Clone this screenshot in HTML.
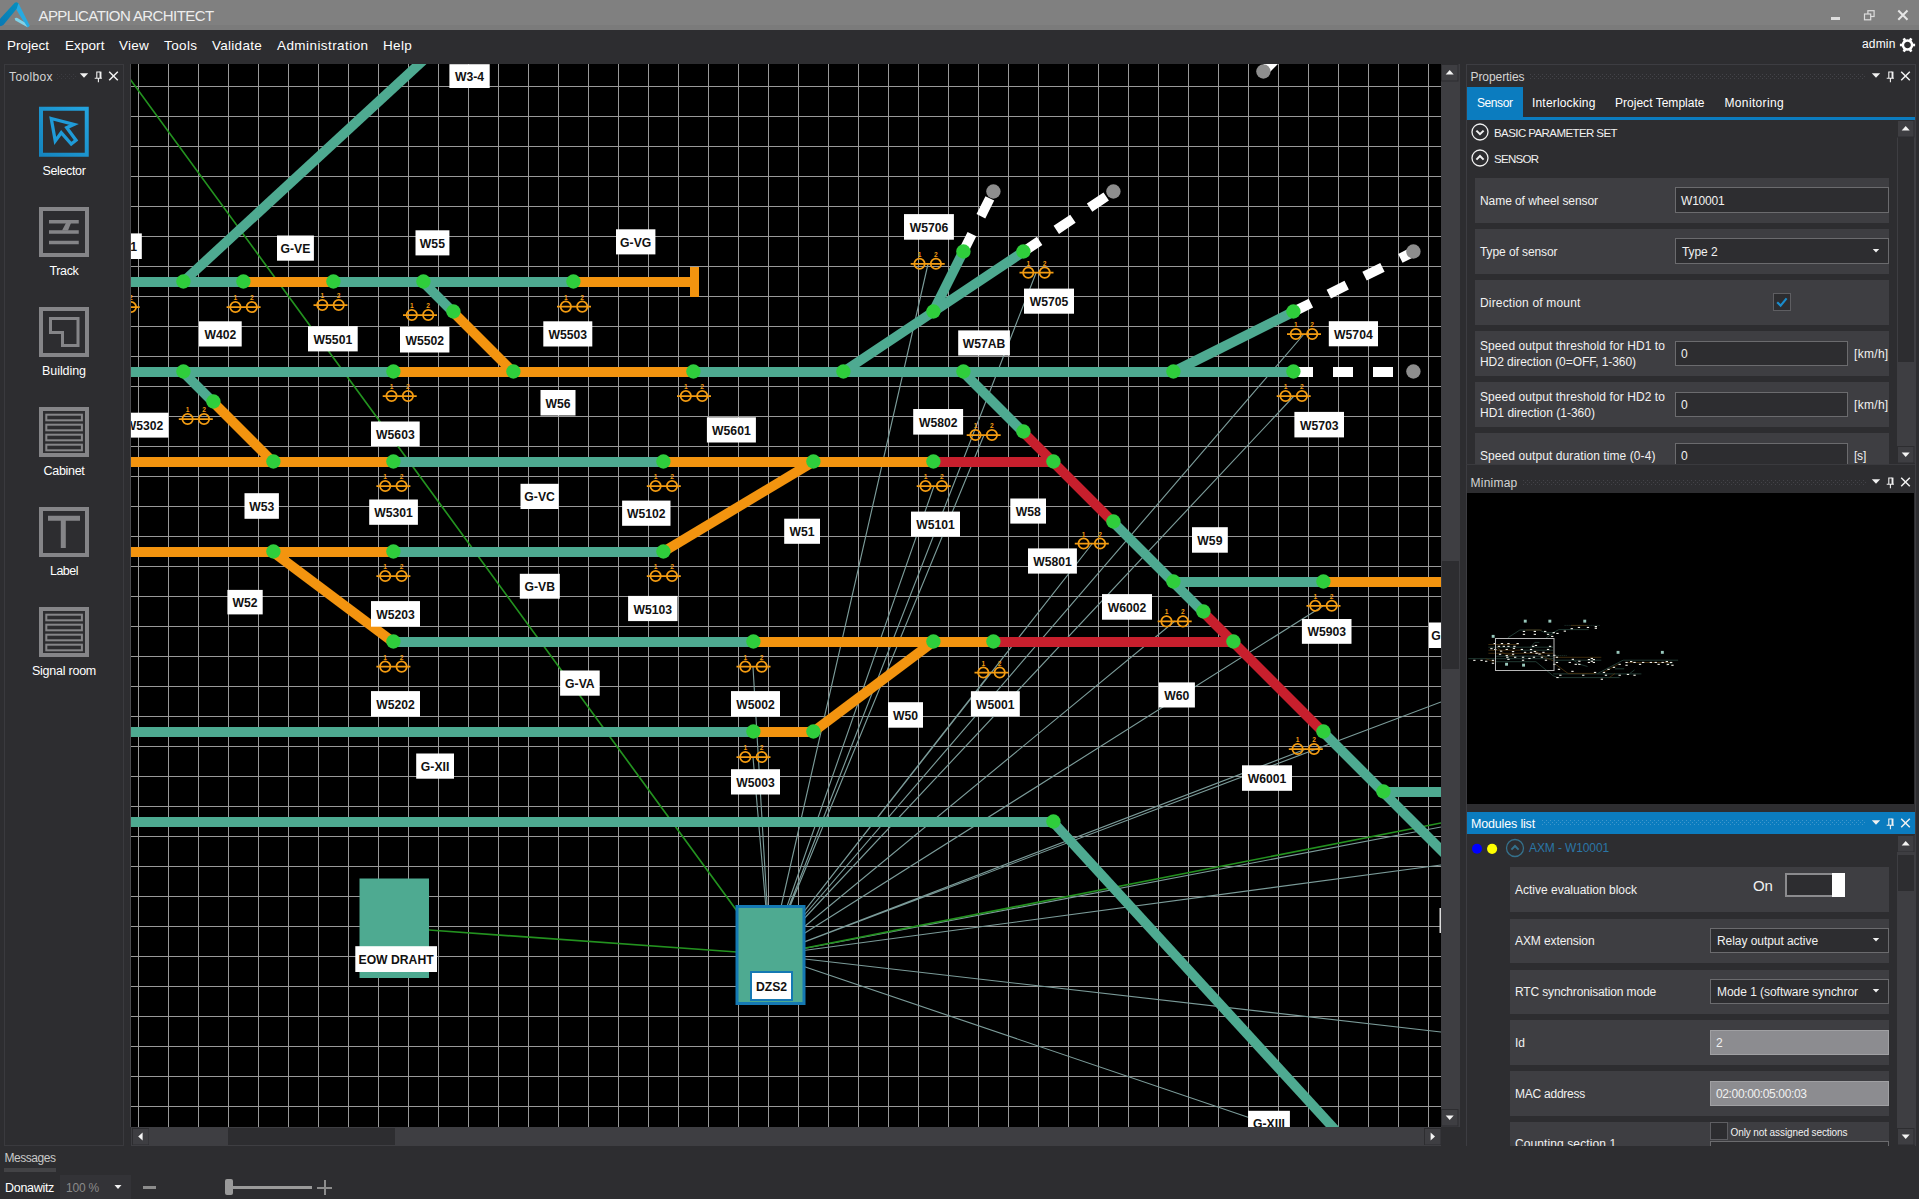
<!DOCTYPE html>
<html><head><meta charset="utf-8"><title>Application Architect</title>
<style>
html,body{margin:0;padding:0;background:#2d2d30;}
body{width:1919px;height:1199px;position:relative;overflow:hidden;font-family:"Liberation Sans",sans-serif;}
.t{position:absolute;white-space:nowrap;line-height:20px;height:20px;}
.r{position:absolute;box-sizing:border-box;}
svg{position:absolute;display:block;}
svg text{font-family:"Liberation Sans",sans-serif;}
</style></head><body>
<div class="r" style="left:0px;top:0px;width:1919px;height:30px;background:#808080;"></div>
<div class="r" style="left:0px;top:25px;width:1919px;height:5px;background:#7b7b7b;"></div>
<svg style="left:0;top:0" width="34" height="30" viewBox="0 0 34 30">
<defs><linearGradient id="lg1" x1="0" y1="1" x2="1" y2="0"><stop offset="0" stop-color="#0a78b4"/><stop offset="1" stop-color="#0590bf"/></linearGradient></defs>
<path d="M-2 20.8 L14.8 2.8 Q16.6 1.4 18.4 3.4 L18.6 6.4 L3.8 24.6 Q1.4 26.8 -2 26.2 Z" fill="url(#lg1)"/>
<path d="M18.4 3.2 L29.6 25.2 Q29.2 27.6 27.2 27.2 L16.4 9.8 Z" fill="#27aae1"/>
<path d="M14.6 18.6 Q15.6 17.4 17.4 17.9 L24.4 22.2 L27.6 27.2 L15.4 20.6 Z" fill="#7fd3ea"/>
</svg>
<span class="t" style="left:38.5px;top:5.5px;font-size:15px;color:#ededed;letter-spacing:-0.583px;">APPLICATION ARCHITECT</span>
<div class="r" style="left:1831px;top:17px;width:9px;height:3px;background:#dedede;"></div>
<svg style="left:1860px;top:6px" width="52" height="18" viewBox="1860 6 52 18">
<rect x="1867.9" y="10.7" width="6.2" height="5.8" fill="none" stroke="#dcdcdc" stroke-width="1.2"/>
<rect x="1864.5" y="14.0" width="6.2" height="5.8" fill="#808080" stroke="#dcdcdc" stroke-width="1.2"/>
<path d="M1898.3 10.5 L1907.5 19.7 M1907.5 10.5 L1898.3 19.7" stroke="#e6e6e6" stroke-width="2" fill="none"/>
</svg>
<div class="r" style="left:0px;top:30px;width:1919px;height:34px;background:#2d2d30;"></div>
<span class="t" style="left:7px;top:35.5px;font-size:13.5px;color:#ffffff;letter-spacing:-0.002px;">Project</span>
<span class="t" style="left:65px;top:35.5px;font-size:13.5px;color:#ffffff;letter-spacing:0.081px;">Export</span>
<span class="t" style="left:119px;top:35.5px;font-size:13.5px;color:#ffffff;letter-spacing:0.246px;">View</span>
<span class="t" style="left:164px;top:35.5px;font-size:13.5px;color:#ffffff;letter-spacing:0.397px;">Tools</span>
<span class="t" style="left:212px;top:35.5px;font-size:13.5px;color:#ffffff;letter-spacing:0.277px;">Validate</span>
<span class="t" style="left:277px;top:35.5px;font-size:13.5px;color:#ffffff;letter-spacing:0.426px;">Administration</span>
<span class="t" style="left:383px;top:35.5px;font-size:13.5px;color:#ffffff;letter-spacing:0.309px;">Help</span>
<span class="t" style="left:1862px;top:34.0px;font-size:12px;color:#ffffff;letter-spacing:0.164px;">admin</span>
<svg style="left:1897px;top:35px" width="22" height="20" viewBox="-10.5 -10 22 20"><g fill="#fff"><rect x="4.6" y="-1.3" width="3" height="2.6" transform="rotate(0)"/><rect x="4.6" y="-1.3" width="3" height="2.6" transform="rotate(60)"/><rect x="4.6" y="-1.3" width="3" height="2.6" transform="rotate(120)"/><rect x="4.6" y="-1.3" width="3" height="2.6" transform="rotate(180)"/><rect x="4.6" y="-1.3" width="3" height="2.6" transform="rotate(240)"/><rect x="4.6" y="-1.3" width="3" height="2.6" transform="rotate(300)"/></g><circle r="4.6" fill="none" stroke="#fff" stroke-width="2.5"/></svg>
<div class="r" style="left:4px;top:64px;width:120px;height:1082px;background:#2d2d30;border:1px solid #3a3a3e;"></div>
<span class="t" style="left:9px;top:67.0px;font-size:12px;color:#d4d4d4;letter-spacing:0.377px;">Toolbox</span>
<div class="r" style="left:57px;top:74px;width:19px;height:6px;background-image:linear-gradient(90deg,#3b3b40 1px,transparent 1px),linear-gradient(90deg,#3b3b40 1px,transparent 1px),linear-gradient(90deg,#3b3b40 1px,transparent 1px);background-size:4px 1px,4px 1px,4px 1px;background-position:0 0,2px 2px,0 4px;background-repeat:repeat-x;"></div>
<svg style="left:73px;top:66.7px" width="50" height="18" viewBox="73 66.7 50 18">
<path d="M79.8 72.9 h8.4 l-4.2 4.6 z" fill="#f1f1f1"/>
<path d="M96.8 77.7 v-6 h3.4 M94.7 78.0 h7.2 M98.4 78.3 v3.6" stroke="#f1f1f1" stroke-width="1.1" fill="none"/>
<path d="M100.5 71.3 v6.6" stroke="#f1f1f1" stroke-width="1.9" fill="none"/>
<path d="M109.2 71.5 l8.6 8.4 M117.8 71.5 l-8.6 8.4" stroke="#f1f1f1" stroke-width="1.5" fill="none"/>
</svg>
<svg style="left:0;top:100px" width="130" height="570" viewBox="0 100 130 570"><defs><linearGradient id="selg" x1="1" y1="0" x2="0" y2="1"><stop offset="0" stop-color="#23a3de"/><stop offset="1" stop-color="#1585bf"/></linearGradient></defs><rect x="41" y="108.75" width="45.75" height="46" fill="none" stroke="url(#selg)" stroke-width="4"/><path d="M51.25 118.5 L74 124.35 L66.75 127.75 L76 140.25 L71.25 144 L61.25 132.75 L55.25 141 Z" fill="none" stroke="#1f9bd8" stroke-width="3.3" stroke-linejoin="miter"/><rect x="41" y="209" width="46" height="46" fill="none" stroke="#858588" stroke-width="4"/><path d="M49 221.75 H78.75 M49 232 H78.75 M49 242.5 H78.75" stroke="#858588" stroke-width="3.7" fill="none"/><path d="M66 223 H71 L68 230.6 H62 Z" fill="#858588"/><rect x="41" y="309" width="46" height="46" fill="none" stroke="#858588" stroke-width="4"/><path d="M50.5 318.5 H78 V345.5 H62.5 V332.5 H50.5 Z" fill="none" stroke="#858588" stroke-width="3"/><rect x="41" y="409" width="46" height="46" fill="none" stroke="#858588" stroke-width="4"/><rect x="46.3" y="414.7" width="35.6" height="5.6" fill="none" stroke="#858588" stroke-width="2"/><rect x="46.3" y="424.7" width="35.6" height="5.6" fill="none" stroke="#858588" stroke-width="2"/><rect x="46.3" y="434.7" width="35.6" height="5.6" fill="none" stroke="#858588" stroke-width="2"/><rect x="46.3" y="444.7" width="35.6" height="5.6" fill="none" stroke="#858588" stroke-width="2"/><rect x="41" y="509" width="46" height="46" fill="none" stroke="#858588" stroke-width="4"/><path d="M48 518.3 H80 M63.3 520 V548" stroke="#858588" stroke-width="5" fill="none"/><rect x="41" y="609" width="46" height="46" fill="none" stroke="#858588" stroke-width="4"/><rect x="46.3" y="614.7" width="35.6" height="5.6" fill="none" stroke="#858588" stroke-width="2"/><rect x="46.3" y="624.7" width="35.6" height="5.6" fill="none" stroke="#858588" stroke-width="2"/><rect x="46.3" y="634.7" width="35.6" height="5.6" fill="none" stroke="#858588" stroke-width="2"/><rect x="46.3" y="644.7" width="35.6" height="5.6" fill="none" stroke="#858588" stroke-width="2"/></svg>
<span class="t" style="left:42.5px;top:161.0px;font-size:12.5px;color:#ffffff;letter-spacing:-0.357px;">Selector</span>
<span class="t" style="left:49.5px;top:261.0px;font-size:12.5px;color:#ffffff;letter-spacing:-0.357px;">Track</span>
<span class="t" style="left:42.0px;top:361.0px;font-size:12.5px;color:#ffffff;letter-spacing:-0.059px;">Building</span>
<span class="t" style="left:43.5px;top:461.0px;font-size:12.5px;color:#ffffff;letter-spacing:-0.297px;">Cabinet</span>
<span class="t" style="left:50.0px;top:561.0px;font-size:12.5px;color:#ffffff;letter-spacing:-0.516px;">Label</span>
<span class="t" style="left:32.0px;top:661.0px;font-size:12.5px;color:#ffffff;letter-spacing:-0.245px;">Signal room</span>
<div class="r" style="left:0px;top:1146px;width:1919px;height:53px;background:#2d2d30;"></div>
<span class="t" style="left:4.5px;top:1148.0px;font-size:12px;color:#c9c9c9;letter-spacing:-0.461px;">Messages</span>
<div class="r" style="left:4px;top:1168px;width:52px;height:4px;background:#434346;"></div>
<span class="t" style="left:5px;top:1178.0px;font-size:12.5px;color:#ffffff;letter-spacing:-0.301px;">Donawitz</span>
<div class="r" style="left:60px;top:1175px;width:71px;height:24px;background:#333337;"></div>
<span class="t" style="left:66px;top:1178.0px;font-size:12px;color:#8a8a8a;letter-spacing:-0.205px;">100 %</span>
<svg style="left:112px;top:1182px" width="12" height="10" viewBox="0 0 12 10"><path d="M2.5 3 h7 l-3.5 4 z" fill="#f1f1f1"/></svg>
<div class="r" style="left:143px;top:1186px;width:13px;height:3px;background:#8c8c8c;"></div>
<div class="r" style="left:233px;top:1186px;width:79px;height:3px;background:#9a9a9a;"></div>
<div class="r" style="left:225px;top:1179px;width:8px;height:16px;background:#9a9a9a;border-radius:2px;"></div>
<div class="r" style="left:317px;top:1186.5px;width:15px;height:2.0px;background:#8c8c8c;"></div>
<div class="r" style="left:323.5px;top:1180px;width:2.0px;height:15px;background:#8c8c8c;"></div>
<div class="r" style="left:130px;top:64px;width:1px;height:1063px;background:#4a4a4d;"></div>
<svg style="left:131px;top:64px;background:#000" width="1310" height="1063" viewBox="131 64 1310 1063"><path d="M138.5 64V1127M168.5 64V1127M198.5 64V1127M228.5 64V1127M258.5 64V1127M288.5 64V1127M318.5 64V1127M348.5 64V1127M378.5 64V1127M408.5 64V1127M438.5 64V1127M468.5 64V1127M498.5 64V1127M528.5 64V1127M558.5 64V1127M588.5 64V1127M618.5 64V1127M648.5 64V1127M678.5 64V1127M708.5 64V1127M738.5 64V1127M768.5 64V1127M798.5 64V1127M828.5 64V1127M858.5 64V1127M888.5 64V1127M918.5 64V1127M948.5 64V1127M978.5 64V1127M1008.5 64V1127M1038.5 64V1127M1068.5 64V1127M1098.5 64V1127M1128.5 64V1127M1158.5 64V1127M1188.5 64V1127M1218.5 64V1127M1248.5 64V1127M1278.5 64V1127M1308.5 64V1127M1338.5 64V1127M1368.5 64V1127M1398.5 64V1127M1428.5 64V1127M131 86.5H1441M131 116.5H1441M131 146.5H1441M131 176.5H1441M131 206.5H1441M131 236.5H1441M131 266.5H1441M131 296.5H1441M131 326.5H1441M131 356.5H1441M131 386.5H1441M131 416.5H1441M131 446.5H1441M131 476.5H1441M131 506.5H1441M131 536.5H1441M131 566.5H1441M131 596.5H1441M131 626.5H1441M131 656.5H1441M131 686.5H1441M131 716.5H1441M131 746.5H1441M131 776.5H1441M131 806.5H1441M131 836.5H1441M131 866.5H1441M131 896.5H1441M131 926.5H1441M131 956.5H1441M131 986.5H1441M131 1016.5H1441M131 1046.5H1441M131 1076.5H1441M131 1106.5H1441" stroke="#999999" stroke-width="1" fill="none" shape-rendering="crispEdges"/><path d="M770 955L753 667M770 955L753 757M770 955L928 264M770 955L934 486M770 955L1036 273M770 955L984 435M770 955L1092 544M770 955L991 672M770 955L1304 334M770 955L1294 396M770 955L1175 621M770 955L1323 606M770 955L1306 749M770 955L1441 702M770 955L1441 827M770 955L1441 865M770 955L1441 1032M770 955L1262 1122" stroke="#7b9b99" stroke-width="1.15" fill="none"/><path d="M118 62.5 L737 911 M429 930 L737 952 M770 955 L1441 823" stroke="#23921f" stroke-width="1.7" fill="none"/><line x1="130" y1="282" x2="243" y2="282" stroke="#4eaa91" stroke-width="9.8"/><line x1="243" y1="282" x2="333" y2="282" stroke="#f3940f" stroke-width="9.8"/><line x1="333" y1="282" x2="573" y2="282" stroke="#4eaa91" stroke-width="9.8"/><line x1="573" y1="282" x2="695" y2="282" stroke="#f3940f" stroke-width="9.8"/><line x1="183" y1="282" x2="486.5" y2="2" stroke="#4eaa91" stroke-width="9.8"/><line x1="423" y1="282" x2="453" y2="312" stroke="#4eaa91" stroke-width="9.8"/><line x1="453" y1="312" x2="513" y2="372" stroke="#f3940f" stroke-width="9.8"/><line x1="130" y1="372" x2="393" y2="372" stroke="#4eaa91" stroke-width="9.8"/><line x1="393" y1="372" x2="693" y2="372" stroke="#f3940f" stroke-width="9.8"/><line x1="693" y1="372" x2="1293" y2="372" stroke="#4eaa91" stroke-width="9.8"/><line x1="183" y1="372" x2="213" y2="402" stroke="#4eaa91" stroke-width="9.8"/><line x1="213" y1="402" x2="273" y2="462" stroke="#f3940f" stroke-width="9.8"/><line x1="843" y1="372" x2="933" y2="312" stroke="#4eaa91" stroke-width="9.8"/><line x1="933" y1="312" x2="963" y2="252" stroke="#4eaa91" stroke-width="9.8"/><line x1="933" y1="312" x2="1023" y2="252" stroke="#4eaa91" stroke-width="9.8"/><line x1="1173" y1="372" x2="1293" y2="312" stroke="#4eaa91" stroke-width="9.8"/><line x1="963" y1="372" x2="1023" y2="432" stroke="#4eaa91" stroke-width="9.8"/><line x1="130" y1="462" x2="393" y2="462" stroke="#f3940f" stroke-width="9.8"/><line x1="393" y1="462" x2="663" y2="462" stroke="#4eaa91" stroke-width="9.8"/><line x1="663" y1="462" x2="933" y2="462" stroke="#f3940f" stroke-width="9.8"/><line x1="663" y1="552" x2="813" y2="462" stroke="#f3940f" stroke-width="9.8"/><line x1="130" y1="552" x2="393" y2="552" stroke="#f3940f" stroke-width="9.8"/><line x1="393" y1="552" x2="663" y2="552" stroke="#4eaa91" stroke-width="9.8"/><line x1="273" y1="552" x2="393" y2="642" stroke="#f3940f" stroke-width="9.8"/><line x1="393" y1="642" x2="753" y2="642" stroke="#4eaa91" stroke-width="9.8"/><line x1="753" y1="642" x2="993" y2="642" stroke="#f3940f" stroke-width="9.8"/><line x1="933" y1="642" x2="813" y2="732" stroke="#f3940f" stroke-width="9.8"/><line x1="130" y1="732" x2="753" y2="732" stroke="#4eaa91" stroke-width="9.8"/><line x1="753" y1="732" x2="813" y2="732" stroke="#f3940f" stroke-width="9.8"/><line x1="130" y1="822" x2="1053" y2="822" stroke="#4eaa91" stroke-width="9.8"/><line x1="1053" y1="822" x2="1360" y2="1157" stroke="#4eaa91" stroke-width="9.8"/><line x1="1113" y1="522" x2="1203" y2="612" stroke="#4eaa91" stroke-width="9.8"/><line x1="1173" y1="582" x2="1323" y2="582" stroke="#4eaa91" stroke-width="9.8"/><line x1="1323" y1="582" x2="1445" y2="582" stroke="#f3940f" stroke-width="9.8"/><line x1="1323" y1="732" x2="1463" y2="872" stroke="#4eaa91" stroke-width="9.8"/><line x1="1383" y1="792" x2="1445" y2="792" stroke="#4eaa91" stroke-width="9.8"/><line x1="933" y1="462" x2="1053" y2="462" stroke="#c81f2d" stroke-width="9.8"/><line x1="1023" y1="432" x2="1113" y2="522" stroke="#c81f2d" stroke-width="9.8"/><line x1="993" y1="642" x2="1233" y2="642" stroke="#c81f2d" stroke-width="9.8"/><line x1="1203" y1="612" x2="1323" y2="732" stroke="#c81f2d" stroke-width="9.8"/><rect x="690" y="267" width="9" height="30" fill="#f3940f"/><line x1="963" y1="252" x2="993" y2="192" stroke="#fff" stroke-width="9.8" stroke-dasharray="20 20"/><line x1="1023" y1="252" x2="1113" y2="192" stroke="#fff" stroke-width="9.8" stroke-dasharray="20 20"/><line x1="1293" y1="312" x2="1413" y2="252" stroke="#fff" stroke-width="9.8" stroke-dasharray="20 20"/><line x1="1293" y1="372" x2="1413" y2="372" stroke="#fff" stroke-width="9.8" stroke-dasharray="20 20"/><line x1="1263" y1="72" x2="1313" y2="22" stroke="#fff" stroke-width="9.8" stroke-dasharray="20 20"/><circle cx="183.4" cy="281.5" r="7.2" fill="#2fce3c"/><circle cx="243.4" cy="281.5" r="7.2" fill="#2fce3c"/><circle cx="333.4" cy="281.5" r="7.2" fill="#2fce3c"/><circle cx="423.4" cy="281.5" r="7.2" fill="#2fce3c"/><circle cx="573.4" cy="281.5" r="7.2" fill="#2fce3c"/><circle cx="453.4" cy="311.5" r="7.2" fill="#2fce3c"/><circle cx="183.4" cy="371.5" r="7.2" fill="#2fce3c"/><circle cx="393.4" cy="371.5" r="7.2" fill="#2fce3c"/><circle cx="513.4" cy="371.5" r="7.2" fill="#2fce3c"/><circle cx="693.4" cy="371.5" r="7.2" fill="#2fce3c"/><circle cx="843.4" cy="371.5" r="7.2" fill="#2fce3c"/><circle cx="963.4" cy="371.5" r="7.2" fill="#2fce3c"/><circle cx="1173.4" cy="371.5" r="7.2" fill="#2fce3c"/><circle cx="1293.4" cy="371.5" r="7.2" fill="#2fce3c"/><circle cx="213.4" cy="401.5" r="7.2" fill="#2fce3c"/><circle cx="273.4" cy="461.5" r="7.2" fill="#2fce3c"/><circle cx="393.4" cy="461.5" r="7.2" fill="#2fce3c"/><circle cx="663.4" cy="461.5" r="7.2" fill="#2fce3c"/><circle cx="813.4" cy="461.5" r="7.2" fill="#2fce3c"/><circle cx="933.4" cy="461.5" r="7.2" fill="#2fce3c"/><circle cx="1053.4" cy="461.5" r="7.2" fill="#2fce3c"/><circle cx="933.4" cy="311.5" r="7.2" fill="#2fce3c"/><circle cx="963.4" cy="251.5" r="7.2" fill="#2fce3c"/><circle cx="1023.4" cy="251.5" r="7.2" fill="#2fce3c"/><circle cx="1293.4" cy="311.5" r="7.2" fill="#2fce3c"/><circle cx="1023.4" cy="431.5" r="7.2" fill="#2fce3c"/><circle cx="273.4" cy="551.5" r="7.2" fill="#2fce3c"/><circle cx="393.4" cy="551.5" r="7.2" fill="#2fce3c"/><circle cx="663.4" cy="551.5" r="7.2" fill="#2fce3c"/><circle cx="393.4" cy="641.5" r="7.2" fill="#2fce3c"/><circle cx="753.4" cy="641.5" r="7.2" fill="#2fce3c"/><circle cx="933.4" cy="641.5" r="7.2" fill="#2fce3c"/><circle cx="993.4" cy="641.5" r="7.2" fill="#2fce3c"/><circle cx="1233.4" cy="641.5" r="7.2" fill="#2fce3c"/><circle cx="753.4" cy="731.5" r="7.2" fill="#2fce3c"/><circle cx="813.4" cy="731.5" r="7.2" fill="#2fce3c"/><circle cx="1053.4" cy="821.5" r="7.2" fill="#2fce3c"/><circle cx="1113.4" cy="521.5" r="7.2" fill="#2fce3c"/><circle cx="1173.4" cy="581.5" r="7.2" fill="#2fce3c"/><circle cx="1323.4" cy="581.5" r="7.2" fill="#2fce3c"/><circle cx="1203.4" cy="611.5" r="7.2" fill="#2fce3c"/><circle cx="1323.4" cy="731.5" r="7.2" fill="#2fce3c"/><circle cx="1383.4" cy="791.5" r="7.2" fill="#2fce3c"/><circle cx="993.4" cy="191.5" r="7.2" fill="#8e8e8e"/><circle cx="1113.4" cy="191.5" r="7.2" fill="#8e8e8e"/><circle cx="1413.4" cy="251.5" r="7.2" fill="#8e8e8e"/><circle cx="1413.4" cy="371.5" r="7.2" fill="#8e8e8e"/><circle cx="1263.4" cy="71.5" r="7.2" fill="#8e8e8e"/><g transform="translate(243.6 307)" stroke="#f39c12" fill="none" stroke-width="1.75"><circle cx="-8.2" cy="0" r="5.2"/><circle cx="8.2" cy="0" r="5.2"/><path d="M-17 0H17"/><text x="-8.2" y="-7" font-size="6.6" font-weight="bold" text-anchor="middle" fill="#f39c12" stroke="none">1</text><text x="8.2" y="-7" font-size="6.6" font-weight="bold" text-anchor="middle" fill="#f39c12" stroke="none">2</text></g><g transform="translate(330.5 305)" stroke="#f39c12" fill="none" stroke-width="1.75"><circle cx="-8.2" cy="0" r="5.2"/><circle cx="8.2" cy="0" r="5.2"/><path d="M-17 0H17"/><text x="-8.2" y="-7" font-size="6.6" font-weight="bold" text-anchor="middle" fill="#f39c12" stroke="none">1</text><text x="8.2" y="-7" font-size="6.6" font-weight="bold" text-anchor="middle" fill="#f39c12" stroke="none">2</text></g><g transform="translate(420 315)" stroke="#f39c12" fill="none" stroke-width="1.75"><circle cx="-8.2" cy="0" r="5.2"/><circle cx="8.2" cy="0" r="5.2"/><path d="M-17 0H17"/><text x="-8.2" y="-7" font-size="6.6" font-weight="bold" text-anchor="middle" fill="#f39c12" stroke="none">1</text><text x="8.2" y="-7" font-size="6.6" font-weight="bold" text-anchor="middle" fill="#f39c12" stroke="none">2</text></g><g transform="translate(574 306.6)" stroke="#f39c12" fill="none" stroke-width="1.75"><circle cx="-8.2" cy="0" r="5.2"/><circle cx="8.2" cy="0" r="5.2"/><path d="M-17 0H17"/><text x="-8.2" y="-7" font-size="6.6" font-weight="bold" text-anchor="middle" fill="#f39c12" stroke="none">1</text><text x="8.2" y="-7" font-size="6.6" font-weight="bold" text-anchor="middle" fill="#f39c12" stroke="none">2</text></g><g transform="translate(399.7 396)" stroke="#f39c12" fill="none" stroke-width="1.75"><circle cx="-8.2" cy="0" r="5.2"/><circle cx="8.2" cy="0" r="5.2"/><path d="M-17 0H17"/><text x="-8.2" y="-7" font-size="6.6" font-weight="bold" text-anchor="middle" fill="#f39c12" stroke="none">1</text><text x="8.2" y="-7" font-size="6.6" font-weight="bold" text-anchor="middle" fill="#f39c12" stroke="none">2</text></g><g transform="translate(694 396)" stroke="#f39c12" fill="none" stroke-width="1.75"><circle cx="-8.2" cy="0" r="5.2"/><circle cx="8.2" cy="0" r="5.2"/><path d="M-17 0H17"/><text x="-8.2" y="-7" font-size="6.6" font-weight="bold" text-anchor="middle" fill="#f39c12" stroke="none">1</text><text x="8.2" y="-7" font-size="6.6" font-weight="bold" text-anchor="middle" fill="#f39c12" stroke="none">2</text></g><g transform="translate(195.8 419)" stroke="#f39c12" fill="none" stroke-width="1.75"><circle cx="-8.2" cy="0" r="5.2"/><circle cx="8.2" cy="0" r="5.2"/><path d="M-17 0H17"/><text x="-8.2" y="-7" font-size="6.6" font-weight="bold" text-anchor="middle" fill="#f39c12" stroke="none">1</text><text x="8.2" y="-7" font-size="6.6" font-weight="bold" text-anchor="middle" fill="#f39c12" stroke="none">2</text></g><g transform="translate(122.7 307)" stroke="#f39c12" fill="none" stroke-width="1.75"><circle cx="-8.2" cy="0" r="5.2"/><circle cx="8.2" cy="0" r="5.2"/><path d="M-17 0H17"/><text x="-8.2" y="-7" font-size="6.6" font-weight="bold" text-anchor="middle" fill="#f39c12" stroke="none">1</text><text x="8.2" y="-7" font-size="6.6" font-weight="bold" text-anchor="middle" fill="#f39c12" stroke="none">2</text></g><g transform="translate(393.4 486)" stroke="#f39c12" fill="none" stroke-width="1.75"><circle cx="-8.2" cy="0" r="5.2"/><circle cx="8.2" cy="0" r="5.2"/><path d="M-17 0H17"/><text x="-8.2" y="-7" font-size="6.6" font-weight="bold" text-anchor="middle" fill="#f39c12" stroke="none">1</text><text x="8.2" y="-7" font-size="6.6" font-weight="bold" text-anchor="middle" fill="#f39c12" stroke="none">2</text></g><g transform="translate(663.8 486)" stroke="#f39c12" fill="none" stroke-width="1.75"><circle cx="-8.2" cy="0" r="5.2"/><circle cx="8.2" cy="0" r="5.2"/><path d="M-17 0H17"/><text x="-8.2" y="-7" font-size="6.6" font-weight="bold" text-anchor="middle" fill="#f39c12" stroke="none">1</text><text x="8.2" y="-7" font-size="6.6" font-weight="bold" text-anchor="middle" fill="#f39c12" stroke="none">2</text></g><g transform="translate(393.4 576)" stroke="#f39c12" fill="none" stroke-width="1.75"><circle cx="-8.2" cy="0" r="5.2"/><circle cx="8.2" cy="0" r="5.2"/><path d="M-17 0H17"/><text x="-8.2" y="-7" font-size="6.6" font-weight="bold" text-anchor="middle" fill="#f39c12" stroke="none">1</text><text x="8.2" y="-7" font-size="6.6" font-weight="bold" text-anchor="middle" fill="#f39c12" stroke="none">2</text></g><g transform="translate(663.8 576)" stroke="#f39c12" fill="none" stroke-width="1.75"><circle cx="-8.2" cy="0" r="5.2"/><circle cx="8.2" cy="0" r="5.2"/><path d="M-17 0H17"/><text x="-8.2" y="-7" font-size="6.6" font-weight="bold" text-anchor="middle" fill="#f39c12" stroke="none">1</text><text x="8.2" y="-7" font-size="6.6" font-weight="bold" text-anchor="middle" fill="#f39c12" stroke="none">2</text></g><g transform="translate(393.4 666.6)" stroke="#f39c12" fill="none" stroke-width="1.75"><circle cx="-8.2" cy="0" r="5.2"/><circle cx="8.2" cy="0" r="5.2"/><path d="M-17 0H17"/><text x="-8.2" y="-7" font-size="6.6" font-weight="bold" text-anchor="middle" fill="#f39c12" stroke="none">1</text><text x="8.2" y="-7" font-size="6.6" font-weight="bold" text-anchor="middle" fill="#f39c12" stroke="none">2</text></g><g transform="translate(753.5 666.6)" stroke="#f39c12" fill="none" stroke-width="1.75"><circle cx="-8.2" cy="0" r="5.2"/><circle cx="8.2" cy="0" r="5.2"/><path d="M-17 0H17"/><text x="-8.2" y="-7" font-size="6.6" font-weight="bold" text-anchor="middle" fill="#f39c12" stroke="none">1</text><text x="8.2" y="-7" font-size="6.6" font-weight="bold" text-anchor="middle" fill="#f39c12" stroke="none">2</text></g><g transform="translate(753.5 757)" stroke="#f39c12" fill="none" stroke-width="1.75"><circle cx="-8.2" cy="0" r="5.2"/><circle cx="8.2" cy="0" r="5.2"/><path d="M-17 0H17"/><text x="-8.2" y="-7" font-size="6.6" font-weight="bold" text-anchor="middle" fill="#f39c12" stroke="none">1</text><text x="8.2" y="-7" font-size="6.6" font-weight="bold" text-anchor="middle" fill="#f39c12" stroke="none">2</text></g><g transform="translate(927.7 263.8)" stroke="#f39c12" fill="none" stroke-width="1.75"><circle cx="-8.2" cy="0" r="5.2"/><circle cx="8.2" cy="0" r="5.2"/><path d="M-17 0H17"/><text x="-8.2" y="-7" font-size="6.6" font-weight="bold" text-anchor="middle" fill="#f39c12" stroke="none">1</text><text x="8.2" y="-7" font-size="6.6" font-weight="bold" text-anchor="middle" fill="#f39c12" stroke="none">2</text></g><g transform="translate(1036.5 272.6)" stroke="#f39c12" fill="none" stroke-width="1.75"><circle cx="-8.2" cy="0" r="5.2"/><circle cx="8.2" cy="0" r="5.2"/><path d="M-17 0H17"/><text x="-8.2" y="-7" font-size="6.6" font-weight="bold" text-anchor="middle" fill="#f39c12" stroke="none">1</text><text x="8.2" y="-7" font-size="6.6" font-weight="bold" text-anchor="middle" fill="#f39c12" stroke="none">2</text></g><g transform="translate(1304 334)" stroke="#f39c12" fill="none" stroke-width="1.75"><circle cx="-8.2" cy="0" r="5.2"/><circle cx="8.2" cy="0" r="5.2"/><path d="M-17 0H17"/><text x="-8.2" y="-7" font-size="6.6" font-weight="bold" text-anchor="middle" fill="#f39c12" stroke="none">1</text><text x="8.2" y="-7" font-size="6.6" font-weight="bold" text-anchor="middle" fill="#f39c12" stroke="none">2</text></g><g transform="translate(1293.7 396)" stroke="#f39c12" fill="none" stroke-width="1.75"><circle cx="-8.2" cy="0" r="5.2"/><circle cx="8.2" cy="0" r="5.2"/><path d="M-17 0H17"/><text x="-8.2" y="-7" font-size="6.6" font-weight="bold" text-anchor="middle" fill="#f39c12" stroke="none">1</text><text x="8.2" y="-7" font-size="6.6" font-weight="bold" text-anchor="middle" fill="#f39c12" stroke="none">2</text></g><g transform="translate(983.7 435)" stroke="#f39c12" fill="none" stroke-width="1.75"><circle cx="-8.2" cy="0" r="5.2"/><circle cx="8.2" cy="0" r="5.2"/><path d="M-17 0H17"/><text x="-8.2" y="-7" font-size="6.6" font-weight="bold" text-anchor="middle" fill="#f39c12" stroke="none">1</text><text x="8.2" y="-7" font-size="6.6" font-weight="bold" text-anchor="middle" fill="#f39c12" stroke="none">2</text></g><g transform="translate(933.7 486)" stroke="#f39c12" fill="none" stroke-width="1.75"><circle cx="-8.2" cy="0" r="5.2"/><circle cx="8.2" cy="0" r="5.2"/><path d="M-17 0H17"/><text x="-8.2" y="-7" font-size="6.6" font-weight="bold" text-anchor="middle" fill="#f39c12" stroke="none">1</text><text x="8.2" y="-7" font-size="6.6" font-weight="bold" text-anchor="middle" fill="#f39c12" stroke="none">2</text></g><g transform="translate(1091.8 543.5)" stroke="#f39c12" fill="none" stroke-width="1.75"><circle cx="-8.2" cy="0" r="5.2"/><circle cx="8.2" cy="0" r="5.2"/><path d="M-17 0H17"/><text x="-8.2" y="-7" font-size="6.6" font-weight="bold" text-anchor="middle" fill="#f39c12" stroke="none">1</text><text x="8.2" y="-7" font-size="6.6" font-weight="bold" text-anchor="middle" fill="#f39c12" stroke="none">2</text></g><g transform="translate(1174.7 621.4)" stroke="#f39c12" fill="none" stroke-width="1.75"><circle cx="-8.2" cy="0" r="5.2"/><circle cx="8.2" cy="0" r="5.2"/><path d="M-17 0H17"/><text x="-8.2" y="-7" font-size="6.6" font-weight="bold" text-anchor="middle" fill="#f39c12" stroke="none">1</text><text x="8.2" y="-7" font-size="6.6" font-weight="bold" text-anchor="middle" fill="#f39c12" stroke="none">2</text></g><g transform="translate(1323.5 605.8)" stroke="#f39c12" fill="none" stroke-width="1.75"><circle cx="-8.2" cy="0" r="5.2"/><circle cx="8.2" cy="0" r="5.2"/><path d="M-17 0H17"/><text x="-8.2" y="-7" font-size="6.6" font-weight="bold" text-anchor="middle" fill="#f39c12" stroke="none">1</text><text x="8.2" y="-7" font-size="6.6" font-weight="bold" text-anchor="middle" fill="#f39c12" stroke="none">2</text></g><g transform="translate(991.5 672.5)" stroke="#f39c12" fill="none" stroke-width="1.75"><circle cx="-8.2" cy="0" r="5.2"/><circle cx="8.2" cy="0" r="5.2"/><path d="M-17 0H17"/><text x="-8.2" y="-7" font-size="6.6" font-weight="bold" text-anchor="middle" fill="#f39c12" stroke="none">1</text><text x="8.2" y="-7" font-size="6.6" font-weight="bold" text-anchor="middle" fill="#f39c12" stroke="none">2</text></g><g transform="translate(1305.8 749)" stroke="#f39c12" fill="none" stroke-width="1.75"><circle cx="-8.2" cy="0" r="5.2"/><circle cx="8.2" cy="0" r="5.2"/><path d="M-17 0H17"/><text x="-8.2" y="-7" font-size="6.6" font-weight="bold" text-anchor="middle" fill="#f39c12" stroke="none">1</text><text x="8.2" y="-7" font-size="6.6" font-weight="bold" text-anchor="middle" fill="#f39c12" stroke="none">2</text></g><rect x="359.5" y="878.5" width="69.5" height="99.5" fill="#4eaa91"/><rect x="737" y="906.5" width="67" height="97" fill="#4eaa91" stroke="#1579b3" stroke-width="3"/><rect x="449.4" y="64.2" width="40.3" height="23.8" fill="#fff"/><text x="469.5" y="81.1" font-size="12.2" font-weight="bold" text-anchor="middle" fill="#111">W3-4</text><rect x="100.2" y="233.4" width="41.6" height="25.6" fill="#fff"/><text x="121.0" y="251.2" font-size="12.2" font-weight="bold" text-anchor="middle" fill="#111">W401</text><rect x="277.0" y="235.5" width="36.9" height="25.2" fill="#fff"/><text x="295.4" y="253.1" font-size="12.2" font-weight="bold" text-anchor="middle" fill="#111">G-VE</text><rect x="415.5" y="230.3" width="33.9" height="25.1" fill="#fff"/><text x="432.4" y="247.9" font-size="12.2" font-weight="bold" text-anchor="middle" fill="#111">W55</text><rect x="616.0" y="229.3" width="39.4" height="25.1" fill="#fff"/><text x="635.7" y="246.9" font-size="12.2" font-weight="bold" text-anchor="middle" fill="#111">G-VG</text><rect x="199.0" y="321.3" width="42.7" height="25.2" fill="#fff"/><text x="220.3" y="338.9" font-size="12.2" font-weight="bold" text-anchor="middle" fill="#111">W402</text><rect x="308.0" y="326.2" width="49.7" height="25.2" fill="#fff"/><text x="332.9" y="343.8" font-size="12.2" font-weight="bold" text-anchor="middle" fill="#111">W5501</text><rect x="400.0" y="327.0" width="49.4" height="25.5" fill="#fff"/><text x="424.7" y="344.8" font-size="12.2" font-weight="bold" text-anchor="middle" fill="#111">W5502</text><rect x="543.3" y="321.3" width="49.0" height="25.2" fill="#fff"/><text x="567.8" y="338.9" font-size="12.2" font-weight="bold" text-anchor="middle" fill="#111">W5503</text><rect x="540.5" y="390.0" width="35.0" height="25.5" fill="#fff"/><text x="558.0" y="407.8" font-size="12.2" font-weight="bold" text-anchor="middle" fill="#111">W56</text><rect x="119.5" y="412.7" width="49.0" height="24.9" fill="#fff"/><text x="144.0" y="430.1" font-size="12.2" font-weight="bold" text-anchor="middle" fill="#111">W5302</text><rect x="371.0" y="421.5" width="48.7" height="24.8" fill="#fff"/><text x="395.4" y="438.9" font-size="12.2" font-weight="bold" text-anchor="middle" fill="#111">W5603</text><rect x="706.9" y="417.3" width="49.0" height="25.2" fill="#fff"/><text x="731.4" y="434.9" font-size="12.2" font-weight="bold" text-anchor="middle" fill="#111">W5601</text><rect x="244.5" y="493.2" width="34.4" height="25.6" fill="#fff"/><text x="261.7" y="511.0" font-size="12.2" font-weight="bold" text-anchor="middle" fill="#111">W53</text><rect x="369.2" y="499.5" width="48.7" height="25.3" fill="#fff"/><text x="393.5" y="517.1" font-size="12.2" font-weight="bold" text-anchor="middle" fill="#111">W5301</text><rect x="520.5" y="483.8" width="38.2" height="25.2" fill="#fff"/><text x="539.6" y="501.4" font-size="12.2" font-weight="bold" text-anchor="middle" fill="#111">G-VC</text><rect x="622.1" y="500.6" width="48.4" height="25.2" fill="#fff"/><text x="646.3" y="518.2" font-size="12.2" font-weight="bold" text-anchor="middle" fill="#111">W5102</text><rect x="519.8" y="573.8" width="40.0" height="24.9" fill="#fff"/><text x="539.8" y="591.2" font-size="12.2" font-weight="bold" text-anchor="middle" fill="#111">G-VB</text><rect x="227.4" y="589.9" width="35.3" height="24.5" fill="#fff"/><text x="245.1" y="607.1" font-size="12.2" font-weight="bold" text-anchor="middle" fill="#111">W52</text><rect x="371.0" y="601.1" width="49.0" height="25.6" fill="#fff"/><text x="395.5" y="618.9" font-size="12.2" font-weight="bold" text-anchor="middle" fill="#111">W5203</text><rect x="628.1" y="595.9" width="49.4" height="25.2" fill="#fff"/><text x="652.8" y="613.5" font-size="12.2" font-weight="bold" text-anchor="middle" fill="#111">W5103</text><rect x="560.1" y="670.5" width="39.6" height="25.2" fill="#fff"/><text x="579.9" y="688.1" font-size="12.2" font-weight="bold" text-anchor="middle" fill="#111">G-VA</text><rect x="371.0" y="691.1" width="49.0" height="25.6" fill="#fff"/><text x="395.5" y="708.9" font-size="12.2" font-weight="bold" text-anchor="middle" fill="#111">W5202</text><rect x="731.0" y="691.1" width="49.0" height="25.6" fill="#fff"/><text x="755.5" y="708.9" font-size="12.2" font-weight="bold" text-anchor="middle" fill="#111">W5002</text><rect x="416.2" y="753.5" width="37.8" height="25.2" fill="#fff"/><text x="435.1" y="771.1" font-size="12.2" font-weight="bold" text-anchor="middle" fill="#111">G-XII</text><rect x="731.0" y="769.2" width="49.0" height="25.3" fill="#fff"/><text x="755.5" y="786.9" font-size="12.2" font-weight="bold" text-anchor="middle" fill="#111">W5003</text><rect x="904.0" y="214.1" width="49.9" height="25.6" fill="#fff"/><text x="929.0" y="231.9" font-size="12.2" font-weight="bold" text-anchor="middle" fill="#111">W5706</text><rect x="1024.0" y="288.6" width="50.0" height="25.1" fill="#fff"/><text x="1049.0" y="306.1" font-size="12.2" font-weight="bold" text-anchor="middle" fill="#111">W5705</text><rect x="958.2" y="330.4" width="51.7" height="25.1" fill="#fff"/><text x="984.0" y="347.9" font-size="12.2" font-weight="bold" text-anchor="middle" fill="#111">W57AB</text><rect x="1328.8" y="321.2" width="49.2" height="25.1" fill="#fff"/><text x="1353.4" y="338.8" font-size="12.2" font-weight="bold" text-anchor="middle" fill="#111">W5704</text><rect x="913.2" y="409.0" width="49.9" height="25.6" fill="#fff"/><text x="938.2" y="426.8" font-size="12.2" font-weight="bold" text-anchor="middle" fill="#111">W5802</text><rect x="1294.4" y="411.9" width="49.6" height="25.5" fill="#fff"/><text x="1319.2" y="429.6" font-size="12.2" font-weight="bold" text-anchor="middle" fill="#111">W5703</text><rect x="784.2" y="518.7" width="35.8" height="25.1" fill="#fff"/><text x="802.1" y="536.2" font-size="12.2" font-weight="bold" text-anchor="middle" fill="#111">W51</text><rect x="911.0" y="511.6" width="49.0" height="25.1" fill="#fff"/><text x="935.5" y="529.2" font-size="12.2" font-weight="bold" text-anchor="middle" fill="#111">W5101</text><rect x="1010.3" y="498.5" width="35.7" height="25.1" fill="#fff"/><text x="1028.2" y="516.0" font-size="12.2" font-weight="bold" text-anchor="middle" fill="#111">W58</text><rect x="1028.0" y="548.4" width="48.9" height="25.2" fill="#fff"/><text x="1052.5" y="566.0" font-size="12.2" font-weight="bold" text-anchor="middle" fill="#111">W5801</text><rect x="1192.0" y="527.2" width="35.8" height="25.5" fill="#fff"/><text x="1209.9" y="545.0" font-size="12.2" font-weight="bold" text-anchor="middle" fill="#111">W59</text><rect x="1102.0" y="594.1" width="50.0" height="25.6" fill="#fff"/><text x="1127.0" y="611.9" font-size="12.2" font-weight="bold" text-anchor="middle" fill="#111">W6002</text><rect x="1301.9" y="619.0" width="49.6" height="24.8" fill="#fff"/><text x="1326.7" y="636.4" font-size="12.2" font-weight="bold" text-anchor="middle" fill="#111">W5903</text><rect x="1429.0" y="622.5" width="35.0" height="25.5" fill="#fff"/><text x="1446.5" y="640.2" font-size="12.2" font-weight="bold" text-anchor="middle" fill="#111">G-VD</text><rect x="970.9" y="691.2" width="48.9" height="25.2" fill="#fff"/><text x="995.3" y="708.8" font-size="12.2" font-weight="bold" text-anchor="middle" fill="#111">W5001</text><rect x="888.0" y="702.2" width="35.0" height="25.5" fill="#fff"/><text x="905.5" y="720.0" font-size="12.2" font-weight="bold" text-anchor="middle" fill="#111">W50</text><rect x="1158.7" y="682.4" width="36.2" height="25.1" fill="#fff"/><text x="1176.8" y="700.0" font-size="12.2" font-weight="bold" text-anchor="middle" fill="#111">W60</text><rect x="1242.0" y="765.3" width="50.0" height="25.5" fill="#fff"/><text x="1267.0" y="783.0" font-size="12.2" font-weight="bold" text-anchor="middle" fill="#111">W6001</text><rect x="355.3" y="946.2" width="81.7" height="25.8" fill="#fff"/><text x="396.1" y="964.1" font-size="12.2" font-weight="bold" text-anchor="middle" fill="#111">EOW DRAHT</text><rect x="1248.0" y="1110.8" width="41.9" height="25.2" fill="#fff"/><text x="1269.0" y="1128.4" font-size="12.2" font-weight="bold" text-anchor="middle" fill="#111">G-XIII</text><rect x="751" y="972" width="41" height="28" fill="#fff" stroke="#1579b3" stroke-width="2"/><text x="771.5" y="991.1" font-size="12.2" font-weight="bold" text-anchor="middle" fill="#111">DZS2</text><rect x="1439.5" y="908" width="1.5" height="25" fill="#ddd"/></svg>
<div class="r" style="left:1441px;top:64px;width:19px;height:1063px;background:#3e3e42;"></div>
<div class="r" style="left:1441.5px;top:561px;width:17.0px;height:108px;background:#2d2d30;"></div>
<svg style="left:1441px;top:64px" width="17.5" height="17.5" viewBox="0 0 17.5 17.5"><rect x="0.5" y="0.5" width="16.5" height="16.5" fill="#3e3e42" stroke="#2d2d30"/><path d="M4.7 10.4 h8 l-4 -4.4 z" fill="#f4f4f4"/></svg>
<svg style="left:1441px;top:1109px" width="17.5" height="17.5" viewBox="0 0 17.5 17.5"><rect x="0.5" y="0.5" width="16.5" height="16.5" fill="#3e3e42" stroke="#2d2d30"/><path d="M4.7 6.6 h8 l-4 4.4 z" fill="#f4f4f4"/></svg>
<div class="r" style="left:131px;top:1127px;width:1310px;height:18.5px;background:#3e3e42;"></div>
<div class="r" style="left:228px;top:1128px;width:167px;height:16.5px;background:#2d2d30;"></div>
<svg style="left:131.5px;top:1127.5px" width="17.5" height="17.5" viewBox="0 0 17.5 17.5"><rect x="0.5" y="0.5" width="16.5" height="16.5" fill="#3e3e42" stroke="#2d2d30"/><path d="M10.6 4.5 v8 l-4.4 -4 z" fill="#f4f4f4"/></svg>
<svg style="left:1423.5px;top:1127.5px" width="17.5" height="17.5" viewBox="0 0 17.5 17.5"><rect x="0.5" y="0.5" width="16.5" height="16.5" fill="#3e3e42" stroke="#2d2d30"/><path d="M6.6 4.5 v8 l4.4 -4 z" fill="#f4f4f4"/></svg>
<div class="r" style="left:1441px;top:1127px;width:25px;height:19px;background:#2d2d30;"></div>
<div class="r" style="left:1460px;top:64px;width:6px;height:1063px;background:#2d2d30;"></div>
<div class="r" style="left:1460px;top:64px;width:459px;height:1082px;background:#2d2d30;"></div>
<div class="r" style="left:1466px;top:64px;width:450px;height:1082px;background:#2d2d30;border:1px solid #3d3d42;border-bottom:none;"></div>
<span class="t" style="left:1470.5px;top:66.5px;font-size:12px;color:#d4d4d4;letter-spacing:-0.069px;">Properties</span>
<div class="r" style="left:1530px;top:74px;width:336px;height:6px;background-image:linear-gradient(90deg,#434348 1px,transparent 1px),linear-gradient(90deg,#434348 1px,transparent 1px),linear-gradient(90deg,#434348 1px,transparent 1px);background-size:4px 1px,4px 1px,4px 1px;background-position:0 0,2px 2px,0 4px;background-repeat:repeat-x;"></div>
<svg style="left:1865px;top:66.7px" width="50" height="18" viewBox="1865 66.7 50 18">
<path d="M1871.8 72.9 h8.4 l-4.2 4.6 z" fill="#f1f1f1"/>
<path d="M1888.8 77.7 v-6 h3.4 M1886.7 78.0 h7.2 M1890.4 78.3 v3.6" stroke="#f1f1f1" stroke-width="1.1" fill="none"/>
<path d="M1892.5 71.3 v6.6" stroke="#f1f1f1" stroke-width="1.9" fill="none"/>
<path d="M1901.2 71.5 l8.6 8.4 M1909.8 71.5 l-8.6 8.4" stroke="#f1f1f1" stroke-width="1.5" fill="none"/>
</svg>
<div class="r" style="left:1467px;top:87px;width:56px;height:30px;background:#0b7cbf;"></div>
<div class="r" style="left:1467px;top:116.5px;width:448px;height:3.0px;background:#0b7cbf;"></div>
<span class="t" style="left:1477px;top:93.0px;font-size:12px;color:#ffffff;letter-spacing:-0.420px;">Sensor</span>
<span class="t" style="left:1532px;top:93.0px;font-size:12px;color:#ffffff;letter-spacing:0.178px;">Interlocking</span>
<span class="t" style="left:1615px;top:93.0px;font-size:12px;color:#ffffff;letter-spacing:0.022px;">Project Template</span>
<span class="t" style="left:1724.5px;top:93.0px;font-size:12px;color:#ffffff;letter-spacing:0.348px;">Monitoring</span>
<div class="r" style="left:1897px;top:120px;width:17.5px;height:343px;background:#3e3e42;"></div>
<div class="r" style="left:1897.5px;top:137px;width:16.5px;height:225px;background:#2d2d30;"></div>
<svg style="left:1897px;top:120px" width="17.5" height="17.5" viewBox="0 0 17.5 17.5"><rect x="0.5" y="0.5" width="16.5" height="16.5" fill="#3e3e42" stroke="#2d2d30"/><path d="M4.7 10.4 h8 l-4 -4.4 z" fill="#f4f4f4"/></svg>
<svg style="left:1897px;top:445.5px" width="17.5" height="17.5" viewBox="0 0 17.5 17.5"><rect x="0.5" y="0.5" width="16.5" height="16.5" fill="#3e3e42" stroke="#2d2d30"/><path d="M4.7 6.6 h8 l-4 4.4 z" fill="#f4f4f4"/></svg>
<svg style="left:1469px;top:121px" width="22" height="22" viewBox="1469 121 22 22"><circle cx="1480" cy="132" r="8" fill="none" stroke="#f1f1f1" stroke-width="1.3"/><path d="M1476.4 130.6 L1480 134.2 L1483.6 130.6" fill="none" stroke="#f1f1f1" stroke-width="2"/></svg>
<span class="t" style="left:1494px;top:122.5px;font-size:11.5px;color:#f1f1f1;letter-spacing:-0.578px;">BASIC PARAMETER SET</span>
<svg style="left:1469px;top:147px" width="22" height="22" viewBox="1469 147 22 22"><circle cx="1480" cy="158" r="8" fill="none" stroke="#f1f1f1" stroke-width="1.3"/><path d="M1476.4 159.6 L1480 156 L1483.6 159.6" fill="none" stroke="#f1f1f1" stroke-width="2"/></svg>
<span class="t" style="left:1494px;top:148.5px;font-size:11.5px;color:#f1f1f1;letter-spacing:-0.678px;">SENSOR</span>
<div class="r" style="left:1475px;top:178px;width:414px;height:44.5px;background:#3e3e42;"></div>
<span class="t" style="left:1480px;top:190.5px;font-size:12px;color:#f1f1f1;letter-spacing:-0.069px;">Name of wheel sensor</span>
<div class="r" style="left:1675px;top:187px;width:213.5px;height:25.5px;background:#2d2d30;border:1px solid #6b6b6e;"></div>
<span class="t" style="left:1681px;top:190.5px;font-size:12px;color:#f1f1f1;letter-spacing:-0.199px;">W10001</span>
<div class="r" style="left:1475px;top:229px;width:414px;height:44.5px;background:#3e3e42;"></div>
<span class="t" style="left:1480px;top:241.5px;font-size:12px;color:#f1f1f1;letter-spacing:-0.086px;">Type of sensor</span>
<div class="r" style="left:1675px;top:238px;width:213.5px;height:25.5px;background:#2d2d30;border:1px solid #6b6b6e;"></div>
<span class="t" style="left:1682px;top:241.5px;font-size:12px;color:#f1f1f1;letter-spacing:-0.087px;">Type 2</span>
<svg style="left:1870.5px;top:247px" width="10" height="8" viewBox="0 0 10 8"><path d="M1.8 2 h6.4 l-3.2 3.6 z" fill="#f1f1f1"/></svg>
<div class="r" style="left:1475px;top:280px;width:414px;height:45px;background:#3e3e42;"></div>
<span class="t" style="left:1480px;top:292.8px;font-size:12px;color:#f1f1f1;letter-spacing:0.174px;">Direction of mount</span>
<div class="r" style="left:1773px;top:293px;width:18px;height:18px;background:#2d2d30;border:1px solid #5e5e62;"></div>
<svg style="left:1773px;top:293px" width="18" height="18" viewBox="0 0 18 18"><path d="M4.2 9.3 L7.6 12.6 L13.6 5.4" fill="none" stroke="#1a8ccc" stroke-width="2.2"/></svg>
<div class="r" style="left:1475px;top:331px;width:414px;height:45px;background:#3e3e42;"></div>
<span class="t" style="left:1480px;top:336.0px;font-size:12px;color:#f1f1f1;letter-spacing:0.088px;">Speed output threshold for HD1 to</span>
<span class="t" style="left:1480px;top:351.5px;font-size:12px;color:#f1f1f1;letter-spacing:-0.061px;">HD2 direction (0=OFF, 1-360)</span>
<div class="r" style="left:1675px;top:340.5px;width:173px;height:25.0px;background:#2d2d30;border:1px solid #6b6b6e;"></div>
<span class="t" style="left:1681px;top:343.5px;font-size:12px;color:#f1f1f1;">0</span>
<span class="t" style="left:1854px;top:343.5px;font-size:12px;color:#f1f1f1;letter-spacing:0.305px;">[km/h]</span>
<div class="r" style="left:1475px;top:382px;width:414px;height:45px;background:#3e3e42;"></div>
<span class="t" style="left:1480px;top:387.0px;font-size:12px;color:#f1f1f1;letter-spacing:0.088px;">Speed output threshold for HD2 to</span>
<span class="t" style="left:1480px;top:402.5px;font-size:12px;color:#f1f1f1;letter-spacing:0.014px;">HD1 direction (1-360)</span>
<div class="r" style="left:1675px;top:391.5px;width:173px;height:25.0px;background:#2d2d30;border:1px solid #6b6b6e;"></div>
<span class="t" style="left:1681px;top:394.5px;font-size:12px;color:#f1f1f1;">0</span>
<span class="t" style="left:1854px;top:394.5px;font-size:12px;color:#f1f1f1;letter-spacing:0.305px;">[km/h]</span>
<div class="r" style="left:1467px;top:433px;width:1430px;height:30.5px;overflow:hidden;"><div class="r" style="left:8px;top:0;width:414px;height:45px;background:#3e3e42"></div><div class="r" style="left:208px;top:9.5px;width:173px;height:25px;background:#2d2d30;border:1px solid #6b6b6e;"></div></div>
<span class="t" style="left:1480px;top:445.5px;font-size:12px;color:#f1f1f1;letter-spacing:0.086px;">Speed output duration time (0-4)</span>
<span class="t" style="left:1681px;top:445.5px;font-size:12px;color:#f1f1f1;">0</span>
<span class="t" style="left:1854px;top:445.5px;font-size:12px;color:#f1f1f1;letter-spacing:-0.223px;">[s]</span>
<div class="r" style="left:1467px;top:463.5px;width:430px;height:6.5px;background:#2d2d30;"></div>
<div class="r" style="left:1466px;top:463.5px;width:449px;height:1.0px;background:#3a3a3e;"></div>
<span class="t" style="left:1470.5px;top:472.5px;font-size:12px;color:#d4d4d4;letter-spacing:0.237px;">Minimap</span>
<div class="r" style="left:1523px;top:480px;width:343px;height:6px;background-image:linear-gradient(90deg,#434348 1px,transparent 1px),linear-gradient(90deg,#434348 1px,transparent 1px),linear-gradient(90deg,#434348 1px,transparent 1px);background-size:4px 1px,4px 1px,4px 1px;background-position:0 0,2px 2px,0 4px;background-repeat:repeat-x;"></div>
<svg style="left:1865px;top:472.7px" width="50" height="18" viewBox="1865 472.7 50 18">
<path d="M1871.8 478.9 h8.4 l-4.2 4.6 z" fill="#f1f1f1"/>
<path d="M1888.8 483.7 v-6 h3.4 M1886.7 484.0 h7.2 M1890.4 484.3 v3.6" stroke="#f1f1f1" stroke-width="1.1" fill="none"/>
<path d="M1892.5 477.3 v6.6" stroke="#f1f1f1" stroke-width="1.9" fill="none"/>
<path d="M1901.2 477.5 l8.6 8.4 M1909.8 477.5 l-8.6 8.4" stroke="#f1f1f1" stroke-width="1.5" fill="none"/>
</svg>
<svg style="left:1467px;top:493px;background:#000" width="447" height="311" viewBox="1467 493 447 311"><path d="M1507.8 637.8 L1519.9 630.0 L1539.4 630.0 L1545.1 632.7 L1553.1 632.7 L1558.9 629.6 L1588.7 629.6" fill="none" stroke="#28483f" stroke-width="0.8"/><path d="M1525.6 630.0 L1541.7 630.0" fill="none" stroke="#4e3610" stroke-width="0.8"/><path d="M1564.6 625.4 L1600.1 625.4" fill="none" stroke="#28483f" stroke-width="0.8" stroke-dasharray="1 1"/><path d="M1570.9 625.4 L1587.5 625.4" fill="none" stroke="#4e3610" stroke-width="0.8"/><path d="M1546.2 637.8 L1554.3 632.7" fill="none" stroke="#28483f" stroke-width="0.8"/><path d="M1488.4 644.5 L1518.7 644.5" fill="none" stroke="#4e3610" stroke-width="0.8"/><path d="M1488.4 647.2 L1553.1 647.2" fill="none" stroke="#28483f" stroke-width="0.8"/><path d="M1488.4 650.2 L1521.0 650.2" fill="none" stroke="#4e3610" stroke-width="0.8"/><path d="M1521.0 650.2 L1553.1 650.2" fill="none" stroke="#28483f" stroke-width="0.8"/><path d="M1488.4 653.3 L1503.8 653.3" fill="none" stroke="#4e3610" stroke-width="0.8"/><path d="M1503.8 653.3 L1553.1 653.3" fill="none" stroke="#4e3610" stroke-width="0.8"/><path d="M1495.8 656.2 L1553.1 656.2" fill="none" stroke="#28483f" stroke-width="0.8"/><path d="M1468.3 658.7 L1553.1 658.7" fill="none" stroke="#28483f" stroke-width="0.8"/><path d="M1485.5 658.7 L1494.7 661.9" fill="none" stroke="#4e3610" stroke-width="0.8"/><path d="M1495.8 661.7 L1535.9 661.7 L1553.1 675.7 L1557.7 677.6 L1619.6 677.6" fill="none" stroke="#28483f" stroke-width="0.8"/><path d="M1497.0 647.0 L1503.8 653.3 L1514.1 656.2" fill="none" stroke="#4e3610" stroke-width="0.8"/><path d="M1530.2 647.6 L1534.8 642.4 L1539.4 642.4" fill="none" stroke="#28483f" stroke-width="0.8"/><path d="M1534.8 650.4 L1545.1 657.3 L1553.1 660.8" fill="none" stroke="#4e3610" stroke-width="0.8"/><path d="M1554.3 657.3 L1601.3 657.3" fill="none" stroke="#4e3610" stroke-width="0.8"/><path d="M1554.3 655.6 L1566.9 655.6" fill="none" stroke="#28483f" stroke-width="0.8" stroke-dasharray="1 1"/><path d="M1554.3 660.2 L1601.3 660.2" fill="none" stroke="#28483f" stroke-width="0.8"/><path d="M1572.6 659.6 L1579.5 664.2 L1587.5 666.5" fill="none" stroke="#28483f" stroke-width="0.8"/><path d="M1555.4 664.2 L1568.0 673.4" fill="none" stroke="#4e3610" stroke-width="0.8"/><path d="M1553.1 673.9 L1641.4 673.9" fill="none" stroke="#28483f" stroke-width="0.8"/><path d="M1568.0 673.4 L1595.5 673.4" fill="none" stroke="#4e3610" stroke-width="0.8"/><path d="M1597.8 673.4 L1623.1 660.2 L1678.1 660.2" fill="none" stroke="#28483f" stroke-width="0.8"/><path d="M1603.6 672.2 L1618.5 664.2" fill="none" stroke="#4e3610" stroke-width="0.8"/><path d="M1609.3 677.6 L1615.0 673.4" fill="none" stroke="#4e3610" stroke-width="0.8"/><path d="M1626.5 662.5 L1672.4 662.5" fill="none" stroke="#4e3610" stroke-width="0.8"/><path d="M1615.0 668.8 L1624.2 668.8" fill="none" stroke="#28483f" stroke-width="0.8"/><path d="M1629.9 673.4 L1634.5 669.9" fill="none" stroke="#28483f" stroke-width="0.8"/><path d="M1666.6 665.3 L1672.4 662.5" fill="none" stroke="#28483f" stroke-width="0.8"/><g fill="#f0f0e8"><rect x="1473.2" y="659.8" width="2.3" height="1.1"/><rect x="1480.4" y="659.8" width="2.3" height="1.1"/><rect x="1485.0" y="660.7" width="2.3" height="1.1"/><rect x="1491.8" y="659.8" width="2.3" height="1.1"/><rect x="1491.8" y="662.7" width="2.3" height="1.1"/><rect x="1493.6" y="643.0" width="2.3" height="1.1"/><rect x="1500.8" y="643.0" width="2.3" height="1.1"/><rect x="1507.3" y="643.0" width="2.3" height="1.1"/><rect x="1516.5" y="643.0" width="2.3" height="1.1"/><rect x="1497.8" y="645.8" width="2.3" height="1.1"/><rect x="1502.7" y="645.8" width="2.3" height="1.1"/><rect x="1507.3" y="645.8" width="2.3" height="1.1"/><rect x="1513.3" y="645.8" width="2.3" height="1.1"/><rect x="1532.0" y="645.8" width="2.3" height="1.1"/><rect x="1534.8" y="644.9" width="2.3" height="1.1"/><rect x="1548.9" y="645.8" width="2.3" height="1.1"/><rect x="1490.3" y="648.1" width="2.3" height="1.1"/><rect x="1494.1" y="648.9" width="2.3" height="1.1"/><rect x="1505.6" y="648.9" width="2.3" height="1.1"/><rect x="1512.8" y="647.8" width="2.3" height="1.1"/><rect x="1520.7" y="648.9" width="2.3" height="1.1"/><rect x="1529.9" y="648.9" width="2.3" height="1.1"/><rect x="1546.9" y="648.9" width="2.3" height="1.1"/><rect x="1499.9" y="650.6" width="2.3" height="1.1"/><rect x="1511.9" y="651.0" width="2.3" height="1.1"/><rect x="1523.9" y="651.8" width="2.3" height="1.1"/><rect x="1529.9" y="651.8" width="2.3" height="1.1"/><rect x="1533.7" y="651.0" width="2.3" height="1.1"/><rect x="1535.4" y="652.7" width="2.3" height="1.1"/><rect x="1538.3" y="653.5" width="2.3" height="1.1"/><rect x="1542.3" y="651.8" width="2.3" height="1.1"/><rect x="1498.9" y="653.7" width="2.3" height="1.1"/><rect x="1505.6" y="655.0" width="2.3" height="1.1"/><rect x="1511.9" y="653.7" width="2.3" height="1.1"/><rect x="1547.4" y="654.8" width="2.3" height="1.1"/><rect x="1506.2" y="656.7" width="2.3" height="1.1"/><rect x="1514.0" y="656.7" width="2.3" height="1.1"/><rect x="1521.9" y="656.7" width="2.3" height="1.1"/><rect x="1532.8" y="656.7" width="2.3" height="1.1"/><rect x="1540.8" y="656.7" width="2.3" height="1.1"/><rect x="1528.3" y="657.9" width="2.3" height="1.1"/><rect x="1507.3" y="658.8" width="2.3" height="1.1"/><rect x="1521.9" y="659.7" width="2.3" height="1.1"/><rect x="1544.8" y="659.7" width="2.3" height="1.1"/><rect x="1522.8" y="630.9" width="2.3" height="1.1"/><rect x="1533.7" y="630.9" width="2.3" height="1.1"/><rect x="1544.0" y="630.9" width="2.3" height="1.1"/><rect x="1522.8" y="633.8" width="2.3" height="1.1"/><rect x="1533.7" y="633.8" width="2.3" height="1.1"/><rect x="1546.9" y="633.8" width="2.3" height="1.1"/><rect x="1552.6" y="632.1" width="2.3" height="1.1"/><rect x="1556.3" y="632.9" width="2.3" height="1.1"/><rect x="1551.1" y="635.9" width="2.3" height="1.1"/><rect x="1563.7" y="630.6" width="2.3" height="1.1"/><rect x="1570.6" y="628.1" width="2.3" height="1.1"/><rect x="1577.8" y="626.9" width="2.3" height="1.1"/><rect x="1586.8" y="626.9" width="2.3" height="1.1"/><rect x="1594.7" y="626.0" width="2.3" height="1.1"/><rect x="1594.7" y="627.7" width="2.3" height="1.1"/><rect x="1555.8" y="656.7" width="2.3" height="1.1"/><rect x="1555.8" y="661.9" width="2.3" height="1.1"/><rect x="1553.2" y="654.8" width="2.3" height="1.1"/><rect x="1553.2" y="663.8" width="2.3" height="1.1"/><rect x="1557.8" y="668.8" width="2.3" height="1.1"/><rect x="1568.6" y="661.9" width="2.3" height="1.1"/><rect x="1571.7" y="658.8" width="2.3" height="1.1"/><rect x="1574.6" y="663.8" width="2.3" height="1.1"/><rect x="1578.2" y="660.7" width="2.3" height="1.1"/><rect x="1578.2" y="663.8" width="2.3" height="1.1"/><rect x="1587.8" y="659.0" width="2.3" height="1.1"/><rect x="1587.8" y="661.9" width="2.3" height="1.1"/><rect x="1590.7" y="657.9" width="2.3" height="1.1"/><rect x="1590.7" y="660.7" width="2.3" height="1.1"/><rect x="1592.7" y="659.0" width="2.3" height="1.1"/><rect x="1592.7" y="661.9" width="2.3" height="1.1"/><rect x="1571.3" y="670.8" width="2.3" height="1.1"/><rect x="1559.2" y="674.7" width="2.3" height="1.1"/><rect x="1582.1" y="674.7" width="2.3" height="1.1"/><rect x="1556.3" y="677.0" width="2.3" height="1.1"/><rect x="1593.9" y="671.9" width="2.3" height="1.1"/><rect x="1600.7" y="678.7" width="2.3" height="1.1"/><rect x="1602.8" y="671.9" width="2.3" height="1.1"/><rect x="1604.8" y="674.7" width="2.3" height="1.1"/><rect x="1607.4" y="668.8" width="2.3" height="1.1"/><rect x="1612.8" y="666.8" width="2.3" height="1.1"/><rect x="1618.5" y="663.8" width="2.3" height="1.1"/><rect x="1618.5" y="674.7" width="2.3" height="1.1"/><rect x="1625.4" y="661.9" width="2.3" height="1.1"/><rect x="1625.4" y="664.7" width="2.3" height="1.1"/><rect x="1626.8" y="673.9" width="2.3" height="1.1"/><rect x="1630.0" y="661.0" width="2.3" height="1.1"/><rect x="1633.4" y="661.9" width="2.3" height="1.1"/><rect x="1633.4" y="674.7" width="2.3" height="1.1"/><rect x="1638.9" y="663.8" width="2.3" height="1.1"/><rect x="1642.0" y="661.9" width="2.3" height="1.1"/><rect x="1649.7" y="661.9" width="2.3" height="1.1"/><rect x="1654.6" y="661.9" width="2.3" height="1.1"/><rect x="1657.5" y="663.8" width="2.3" height="1.1"/><rect x="1661.5" y="661.9" width="2.3" height="1.1"/><rect x="1665.7" y="661.0" width="2.3" height="1.1"/><rect x="1666.7" y="663.8" width="2.3" height="1.1"/><rect x="1669.9" y="661.9" width="2.3" height="1.1"/><rect x="1671.3" y="664.7" width="2.3" height="1.1"/></g><g fill="#98c8bc"><rect x="1523.8" y="619.7" width="2.9" height="2.9"/><rect x="1548.4" y="619.7" width="2.9" height="2.9"/><rect x="1583.3" y="619.7" width="2.9" height="2.9"/><rect x="1491.7" y="634.9" width="2.9" height="2.9"/><rect x="1505.1" y="662.8" width="2.9" height="2.9"/><rect x="1522.1" y="663.7" width="2.9" height="2.9"/><rect x="1616.6" y="650.9" width="2.9" height="2.9"/><rect x="1660.9" y="650.9" width="2.9" height="2.9"/></g><rect x="1495.5" y="638.5" width="58.5" height="32" fill="none" stroke="#b8b8b8" stroke-width="1"/></svg>
<div class="r" style="left:1467px;top:812px;width:448px;height:22px;background:#0b7cbf;"></div>
<span class="t" style="left:1471px;top:813.5px;font-size:12.5px;color:#ffffff;letter-spacing:-0.166px;">Modules list</span>
<div class="r" style="left:1542px;top:820px;width:324px;height:6px;background-image:linear-gradient(90deg,#3f97cc 1px,transparent 1px),linear-gradient(90deg,#3f97cc 1px,transparent 1px),linear-gradient(90deg,#3f97cc 1px,transparent 1px);background-size:4px 1px,4px 1px,4px 1px;background-position:0 0,2px 2px,0 4px;background-repeat:repeat-x;"></div>
<svg style="left:1865px;top:813.7px" width="50" height="18" viewBox="1865 813.7 50 18">
<path d="M1871.8 819.9000000000001 h8.4 l-4.2 4.6 z" fill="#f1f1f1"/>
<path d="M1888.8 824.7 v-6 h3.4 M1886.7 825.0 h7.2 M1890.4 825.3000000000001 v3.6" stroke="#f1f1f1" stroke-width="1.1" fill="none"/>
<path d="M1892.5 818.3000000000001 v6.6" stroke="#f1f1f1" stroke-width="1.9" fill="none"/>
<path d="M1901.2 818.5 l8.6 8.4 M1909.8 818.5 l-8.6 8.4" stroke="#f1f1f1" stroke-width="1.5" fill="none"/>
</svg>
<div class="r" style="left:1897px;top:834.5px;width:17.5px;height:310.5px;background:#3e3e42;"></div>
<div class="r" style="left:1897.5px;top:855px;width:16.5px;height:36px;background:#2d2d30;"></div>
<svg style="left:1897px;top:834.5px" width="17.5" height="17.5" viewBox="0 0 17.5 17.5"><rect x="0.5" y="0.5" width="16.5" height="16.5" fill="#3e3e42" stroke="#2d2d30"/><path d="M4.7 10.4 h8 l-4 -4.4 z" fill="#f4f4f4"/></svg>
<svg style="left:1897px;top:1127.5px" width="17.5" height="17.5" viewBox="0 0 17.5 17.5"><rect x="0.5" y="0.5" width="16.5" height="16.5" fill="#3e3e42" stroke="#2d2d30"/><path d="M4.7 6.6 h8 l-4 4.4 z" fill="#f4f4f4"/></svg>
<svg style="left:1470px;top:840px" width="60" height="20" viewBox="1470 840 60 20"><circle cx="1477" cy="848.8" r="5" fill="#0000ff"/><circle cx="1492.1" cy="848.8" r="5.1" fill="#ffff00"/></svg>
<svg style="left:1504px;top:836.5px" width="22" height="22" viewBox="1504 836.5 22 22"><circle cx="1515" cy="847.5" r="8.5" fill="none" stroke="#35718c" stroke-width="1.3"/><path d="M1511.4 849.1 L1515 845.5 L1518.6 849.1" fill="none" stroke="#35718c" stroke-width="2"/></svg>
<span class="t" style="left:1529px;top:838.0px;font-size:12px;color:#2b76a6;letter-spacing:-0.113px;">AXM - W10001</span>
<div class="r" style="left:1510px;top:867px;width:379px;height:45px;background:#3e3e42;"></div>
<span class="t" style="left:1515px;top:879.5px;font-size:12px;color:#f1f1f1;letter-spacing:-0.003px;">Active evaluation block</span>
<span class="t" style="left:1753px;top:875.5px;font-size:15px;color:#f1f1f1;letter-spacing:-0.254px;">On</span>
<div class="r" style="left:1785px;top:872.5px;width:60px;height:24.5px;background:#2d2d30;border:2px solid #8b8b8e;"></div>
<div class="r" style="left:1832px;top:872.5px;width:13px;height:24.5px;background:#ffffff;"></div>
<div class="r" style="left:1510px;top:918.5px;width:379px;height:44.5px;background:#3e3e42;"></div>
<span class="t" style="left:1515px;top:931.0px;font-size:12px;color:#f1f1f1;letter-spacing:-0.093px;">AXM extension</span>
<div class="r" style="left:1710px;top:927.5px;width:178.5px;height:25.5px;background:#2d2d30;border:1px solid #6b6b6e;"></div>
<span class="t" style="left:1717px;top:931.0px;font-size:12px;color:#f1f1f1;letter-spacing:-0.055px;">Relay output active</span>
<svg style="left:1870.5px;top:936px" width="10" height="8" viewBox="0 0 10 8"><path d="M1.8 2 h6.4 l-3.2 3.6 z" fill="#f1f1f1"/></svg>
<div class="r" style="left:1510px;top:969.5px;width:379px;height:44.5px;background:#3e3e42;"></div>
<span class="t" style="left:1515px;top:982.0px;font-size:12px;color:#f1f1f1;letter-spacing:-0.146px;">RTC synchronisation mode</span>
<div class="r" style="left:1710px;top:978.5px;width:178.5px;height:25.5px;background:#2d2d30;border:1px solid #6b6b6e;"></div>
<span class="t" style="left:1717px;top:982.0px;font-size:12px;color:#f1f1f1;letter-spacing:-0.042px;">Mode 1 (software synchror</span>
<svg style="left:1870.5px;top:987px" width="10" height="8" viewBox="0 0 10 8"><path d="M1.8 2 h6.4 l-3.2 3.6 z" fill="#f1f1f1"/></svg>
<div class="r" style="left:1510px;top:1020px;width:379px;height:44.5px;background:#3e3e42;"></div>
<span class="t" style="left:1515px;top:1033.0px;font-size:12px;color:#f1f1f1;letter-spacing:-0.003px;">Id</span>
<div class="r" style="left:1710px;top:1029.5px;width:178.5px;height:25.5px;background:#8c8c90;border:1px solid #a0a0a3;"></div>
<span class="t" style="left:1716px;top:1033.0px;font-size:12px;color:#f1f1f1;">2</span>
<div class="r" style="left:1510px;top:1071px;width:379px;height:44.5px;background:#3e3e42;"></div>
<span class="t" style="left:1515px;top:1084.0px;font-size:12px;color:#f1f1f1;letter-spacing:-0.244px;">MAC address</span>
<div class="r" style="left:1710px;top:1080.5px;width:178.5px;height:25.0px;background:#8c8c90;border:1px solid #a0a0a3;"></div>
<span class="t" style="left:1716px;top:1084.0px;font-size:12px;color:#f1f1f1;letter-spacing:-0.367px;">02:00:00:05:00:03</span>
<div class="r" style="left:1467px;top:1122px;width:430px;height:23.5px;overflow:hidden;"><div class="r" style="left:43px;top:0;width:379px;height:60px;background:#3e3e42"></div><div class="r" style="left:243px;top:0;width:17.5px;height:17.5px;background:#2d2d30;border:1px solid #5e5e62;"></div><div class="r" style="left:243px;top:18.5px;width:178.5px;height:25px;background:#2d2d30;border:1px solid #6b6b6e;"></div><span class="t" style="left:48px;top:12px;font-size:12px;color:#f1f1f1;letter-spacing:0.1px">Counting section 1</span><span class="t" style="left:263.5px;top:0.5px;font-size:10px;color:#f1f1f1;letter-spacing:-0.1px">Only not assigned sections</span></div>
<div class="r" style="left:1460px;top:1145.5px;width:459px;height:53.5px;background:#2d2d30;"></div>
</body></html>
